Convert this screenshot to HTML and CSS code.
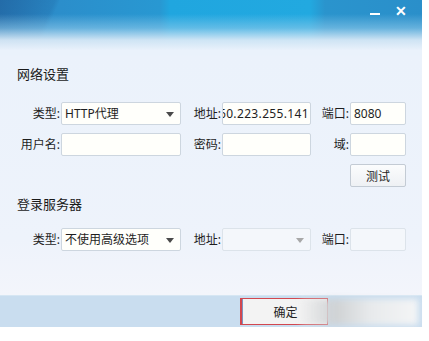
FILE: index.html
```html
<!DOCTYPE html>
<html>
    <head>
        <title>代理设置</title>
        <link rel="stylesheet" href="styles.css">
    </head>
    <body>
        <div class="window">
            <div class="titlebar">
                <span class="win-btn min-btn"></span>
                <span class="win-btn close-btn">&#x2715;</span>
            </div>

            <h2 class="section-title">网络设置</h2>
            <div class="grid">
                <label class="lbl">类型:</label>
                <div class="field select"><span class="val">HTTP代理</span><i class="arrow"></i></div>
                <label class="lbl">地址:</label>
                <div class="field scroll"><span class="val">60.223.255.141</span></div>
                <label class="lbl">端口:</label>
                <div class="field"><span class="val">8080</span></div>

                <label class="lbl">用户名:</label>
                <div class="field"></div>
                <label class="lbl">密码:</label>
                <div class="field"></div>
                <label class="lbl">域:</label>
                <div class="field"></div>

                <div class="test-cell"><button class="btn">测试</button></div>
            </div>

            <h2 class="section-title second">登录服务器</h2>
            <div class="grid">
                <label class="lbl">类型:</label>
                <div class="field select"><span class="val">不使用高级选项</span><i class="arrow"></i></div>
                <label class="lbl">地址:</label>
                <div class="field select disabled"><i class="arrow"></i></div>
                <label class="lbl">端口:</label>
                <div class="field disabled"></div>
            </div>

            <div class="footer">
                <button class="ok-btn">确定</button>
                <div class="smear"></div>
            </div>
        </div>
    </body>
</html>
```

FILE: styles.css
```css
body{
    margin:0;
    padding:0;
    background-color:#ffffff;
    font-family:"Noto Sans", "Noto Sans CJK SC", sans-serif;
    font-size:12px;
    color:#1e1e1e;
}
.window{
    position:relative;
    width:422px;
    height:327px;
    display:flex;
    flex-direction:column;
    background:
        linear-gradient(to bottom, rgba(234,242,251,0) 0, rgba(234,242,251,0) 55px, #ebf2fb 56px, #eef3fb 240px, #f3f5fb 295px);
    background-color:#eaf2fb;
}
.titlebar{
    height:50px;
    display:flex;
    justify-content:flex-end;
    align-items:flex-start;
    gap:8px;
    padding-right:14px;
    background:
        linear-gradient(to bottom, rgba(234,242,251,0) 0, rgba(234,242,251,0) 14px, rgba(150,205,236,0.55) 28px, rgba(215,232,246,0.95) 40px, #e9f1fb 50px),
        linear-gradient(115deg, rgba(20,70,130,0.35) 0, rgba(20,70,130,0.15) 50px, rgba(255,255,255,0) 55px),
        linear-gradient(to right, #2b80bd 0, #2b8ecb 60px, #2898d2 160px, #20a6df 170px, #22a9e0 310px, #2a94cd 325px, #2a8fca 422px);
}
.win-btn{
    width:14px;
    height:22px;
    color:#ffffff;
    text-align:center;
}
.min-btn{
    margin-top:13px;
    height:2px;
    width:10px;
    background-color:#ffffff;
    margin-right:6px;
}
.close-btn{
    font-size:14px;
    font-weight:bold;
    line-height:22px;
}
.section-title{
    margin:16px 0 0 17px;
    font-size:13px;
    font-weight:normal;
    line-height:16px;
    color:#1a1a1a;
}
.section-title.second{
    margin-top:9px;
}
.grid{
    display:grid;
    grid-template-columns:45px 120px 41px 89px 39px 56px;
    grid-auto-rows:23px;
    row-gap:8px;
    padding-left:16px;
    margin-top:20px;
}
.section-title.second + .grid{
    margin-top:16px;
}
.lbl{
    text-align:right;
    padding-right:1px;
    line-height:23px;
    white-space:nowrap;
}
.field{
    position:relative;
    box-sizing:border-box;
    height:23px;
    border:1px solid #cdd6df;
    border-radius:2px;
    background-color:#fffffb;
    display:flex;
    align-items:center;
    padding:0 3px;
    overflow:hidden;
}
.field .val{
    white-space:nowrap;
    line-height:21px;
}
.scroll{
    justify-content:flex-end;
    padding:0 1px;
}
.scroll .val{
    letter-spacing:0.35px;
}
.select{
    padding-right:18px;
}
.arrow{
    position:absolute;
    right:6px;
    top:9px;
    width:0;
    height:0;
    border-left:4px solid transparent;
    border-right:4px solid transparent;
    border-top:5px solid #4a4a4a;
}
.field.disabled{
    background-color:#f4f7fb;
    border-color:#dce3ea;
}
.field.disabled .arrow{
    border-top-color:#a8a8a8;
}
.test-cell{
    grid-column:6;
}
.btn{
    width:56px;
    height:23px;
    box-sizing:border-box;
    border:1px solid #c3cbd4;
    border-radius:2px;
    background:linear-gradient(to bottom, #fbfcfd, #eef1f4);
    font-family:inherit;
    font-size:12px;
    color:#1e1e1e;
    padding:0;
}
.footer{
    position:relative;
    margin-top:auto;
    height:32px;
    box-sizing:border-box;
    background-color:#c9ddef;
    border-top:1px solid #d6e6f3;
    padding:2px 0 0 240px;
}
.ok-btn{
    width:88px;
    height:27px;
    box-sizing:border-box;
    border:1px solid #d2474f;
    border-left-width:2px;
    box-shadow:inset 1px 0 0 #7d93c0;
    background-color:#f3f3f3;
    font-family:inherit;
    font-size:12px;
    color:#1e1e1e;
    padding:0 0 0 2px;
}
.smear{
    position:absolute;
    left:300px;
    top:3px;
    width:118px;
    height:26px;
    background:linear-gradient(to right, rgba(240,240,240,0.4), #cfd2d4 30%, #e8eaec 60%, #f4f5f6 100%);
    filter:blur(3px);
}
```
